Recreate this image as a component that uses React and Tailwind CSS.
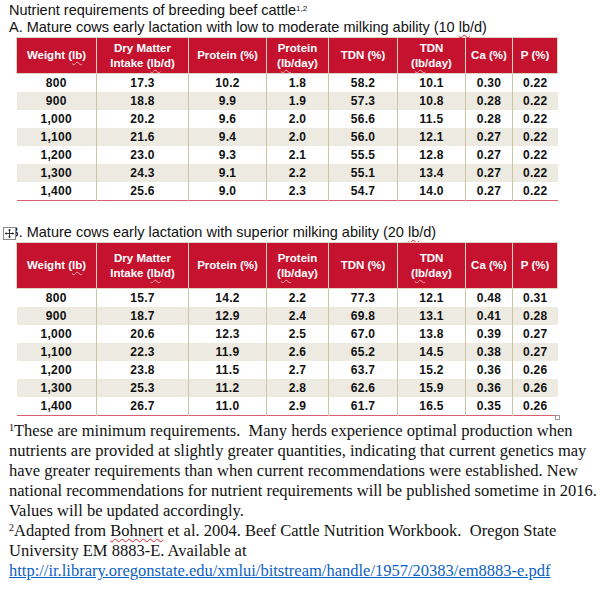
const headers = (light) => [
  <>Weight (<Lb light={light} />)</>,
  <>Dry Matter<br />Intake (<Lb light={light} />/d)</>,
  <>Protein (%)</>,
  <>Protein<br />(<Lb light={light} />/day)</>,
  <>TDN (%)</>,
  <>TDN<br />(<Lb light={light} />/day)</>,
  <>Ca (%)</>,
  <>P (%)</>,
]

const tableA = [
  ['800', '17.3', '10.2', '1.8', '58.2', '10.1', '0.30', '0.22'],
  ['900', '18.8', '9.9', '1.9', '57.3', '10.8', '0.28', '0.22'],
  ['1,000', '20.2', '9.6', '2.0', '56.6', '11.5', '0.28', '0.22'],
  ['1,100', '21.6', '9.4', '2.0', '56.0', '12.1', '0.27', '0.22'],
  ['1,200', '23.0', '9.3', '2.1', '55.5', '12.8', '0.27', '0.22'],
  ['1,300', '24.3', '9.1', '2.2', '55.1', '13.4', '0.27', '0.22'],
  ['1,400', '25.6', '9.0', '2.3', '54.7', '14.0', '0.27', '0.22'],
]

const tableB = [
  ['800', '15.7', '14.2', '2.2', '77.3', '12.1', '0.48', '0.31'],
  ['900', '18.7', '12.9', '2.4', '69.8', '13.1', '0.41', '0.28'],
  ['1,000', '20.6', '12.3', '2.5', '67.0', '13.8', '0.39', '0.27'],
  ['1,100', '22.3', '11.9', '2.6', '65.2', '14.5', '0.38', '0.27'],
  ['1,200', '23.8', '11.5', '2.7', '63.7', '15.2', '0.36', '0.26'],
  ['1,300', '25.3', '11.2', '2.8', '62.6', '15.9', '0.36', '0.26'],
  ['1,400', '26.7', '11.0', '2.9', '61.7', '16.5', '0.35', '0.26'],
]

function Lb({ light }) {
  return (
    <span
      className={
        light
          ? 'underline decoration-wavy decoration-1 decoration-[#f3a9b4] underline-offset-2'
          : 'underline decoration-wavy decoration-1 decoration-[#e0202a] underline-offset-2'
      }
    >
      lb
    </span>
  )
}

function NutrientTable({ rows, headClass }) {
  return (
    <table className="ml-[7px] w-[541px] table-fixed border-collapse font-['Liberation_Sans',Arial,sans-serif] font-bold">
      <colgroup>
        <col className="w-[80px]" />
        <col className="w-[92px]" />
        <col className="w-[78px]" />
        <col className="w-[62px]" />
        <col className="w-[69px]" />
        <col className="w-[68px]" />
        <col className="w-[47px]" />
        <col className="w-[45px]" />
      </colgroup>
      <thead>
        <tr className={`${headClass} bg-[#c5132f]`}>
          {headers(true).map((h, i) => (
            <th
              key={i}
              className="border border-[#ddd5bf] p-0 text-center align-middle text-[11.5px] leading-[15px] font-bold text-white"
            >
              {h}
            </th>
          ))}
        </tr>
      </thead>
      <tbody className="border-b border-[#d9606f]">
        {rows.map((r) => (
          <tr key={r[0]} className="h-[18px] even:bg-[#edebe1]">
            {r.map((v, i) => (
              <td
                key={i}
                className="border-r border-[#cdc4a4] p-0 text-center text-[12px] leading-[18px] tracking-[0.3px] text-[#111] last:border-r-0"
              >
                {v}
              </td>
            ))}
          </tr>
        ))}
      </tbody>
    </table>
  )
}

function MoveHandle() {
  return (
    <svg className="absolute left-[3px] top-[3px]" width="13" height="13" viewBox="0 0 13 13">
      <rect x="0.5" y="0.5" width="12" height="12" fill="#fff" stroke="#8a8a8a" />
      <path d="M6.5 2.5v8M2.5 6.5h8" stroke="#333" strokeWidth="1" />
      <path d="M6.5 1.8l-1.6 1.8h3.2zM6.5 11.2l-1.6-1.8h3.2zM1.8 6.5l1.8-1.6v3.2zM11.2 6.5l-1.8-1.6v3.2z" fill="#333" />
    </svg>
  )
}

export default function App() {
  return (
    <div className="w-[600px] h-[591px] overflow-hidden bg-white pl-[9px] text-[#111]">
      <div className="pt-[2px] font-['Liberation_Sans',Arial,sans-serif] text-[14.5px] leading-[17px]">
        <div>
          Nutrient requirements of breeding beef cattle<sup className="text-[8px]">1,2</sup>
        </div>
        <div>
          A. Mature cows early lactation with low to moderate milking ability (10 <Lb />/d)
        </div>
      </div>

      <div className="mt-[1px]">
        <NutrientTable rows={tableA} headClass="h-[36px]" />
      </div>

      <div className="relative -ml-[9px] mt-[23px] pl-[9px] font-['Liberation_Sans',Arial,sans-serif] text-[14.5px] leading-[17px]">
        <MoveHandle />
        B. Mature cows early lactation with superior milking ability (20 <Lb />/d)
      </div>

      <div className="relative mt-[1px]">
        <NutrientTable rows={tableB} headClass="h-[46px]" />
        <div className="absolute left-[546px] -bottom-[4px] h-[5px] w-[5px] border border-[#9a9a9a] bg-white" />
      </div>

      <div className="mt-[5px] font-['Liberation_Serif','Times_New_Roman',serif] text-[16.5px] leading-[20px] text-[#111] whitespace-nowrap">
        <div>
          <sup className="text-[10px]">1</sup>These are minimum requirements.&nbsp; Many herds experience optimal production when
        </div>
        <div>nutrients are provided at slightly greater quantities, indicating that current genetics may</div>
        <div>have greater requirements than when current recommendations were established. New</div>
        <div>national recommendations for nutrient requirements will be published sometime in 2016.</div>
        <div>Values will be updated accordingly.</div>
        <div>
          <sup className="text-[10px]">2</sup>Adapted from{' '}
          <span className="underline decoration-wavy decoration-1 decoration-[#e0202a] underline-offset-2">Bohnert</span> et al.
          2004. Beef Cattle Nutrition Workbook.&nbsp; Oregon State
        </div>
        <div>University EM 8883-E. Available at</div>
        <div>
          <a href="#" className="text-[#0b5fc4] underline">
            http://ir.library.oregonstate.edu/xmlui/bitstream/handle/1957/20383/em8883-e.pdf
          </a>
        </div>
      </div>
    </div>
  )
}
